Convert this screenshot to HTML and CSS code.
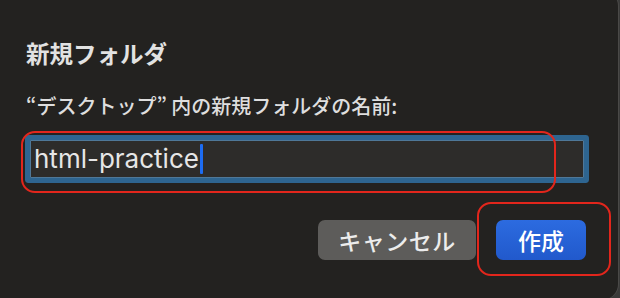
FILE: index.html
```html
<!DOCTYPE html>
<html lang="ja">
<head>
<meta charset="utf-8">
<link rel="stylesheet" href="styles.css">
</head>
<body>
<div class="dialog">
  <div class="title">新規フォルダ</div>
  <div class="label">“デスクトップ” 内の新規フォルダの名前:</div>
  <div class="field"><span class="value">html-practice</span><span class="caret"></span></div>
  <div class="actions">
    <div class="btn cancel">キャンセル</div>
    <div class="btn primary">作成</div>
  </div>
  <div class="mark mark-field"></div>
  <div class="mark mark-btn"></div>
</div>
</body>
</html>
```
FILE: styles.css
```css
html, body {
  margin: 0;
  padding: 0;
  background: #3a3a39;
  overflow: hidden;
}
.dialog {
  position: relative;
  width: 618px;
  height: 310px;
  margin-top: -10px;
  box-sizing: border-box;
  padding: 48px 32px 0 26px;
  background: #232220;
  border-radius: 0 16px 16px 0;
  box-shadow: 1px 0 0 #4a4947;
  font-family: "Noto Sans CJK JP", "Noto Sans", sans-serif;
  color: #e4e4e4;
}
.title {
  font-size: 23.5px;
  line-height: 30px;
  font-weight: 700;
  color: #e2e2e2;
}
.label {
  margin-top: 25px;
  font-size: 20px;
  line-height: 26px;
  font-weight: 500;
  color: #dedede;
}
.field {
  margin-top: 21px;
  margin-left: 4px;
  width: 554px;
  height: 38px;
  box-sizing: border-box;
  border: 1px solid #4f7898;
  background: #2d2c2a;
  box-shadow: 0 0 0 5px #2e6590;
  border-radius: 1px;
  padding-left: 3px;
  display: flex;
  align-items: center;
}
.value {
  font-family: Inter, "Noto Sans", sans-serif;
  font-size: 26px;
  line-height: 36px;
  color: #e6e6e6;
}
.caret {
  display: inline-block;
  width: 3px;
  height: 30px;
  margin-left: 1px;
  background: #1d6cf2;
  border-radius: 1px;
}
.actions {
  margin-top: 42px;
  display: flex;
  justify-content: flex-end;
  gap: 20px;
}
.btn {
  height: 40px;
  box-sizing: border-box;
  border-radius: 7px;
  display: flex;
  align-items: center;
  justify-content: center;
  font-size: 23px;
  font-weight: 500;
  color: #ececec;
}
.cancel {
  width: 158px;
  background: #5d5c5a;
  letter-spacing: 0.5px;
}
.primary {
  width: 90px;
  background: linear-gradient(#2c6be0, #2159cc);
  color: #ffffff;
}
.mark {
  position: absolute;
  border: 2.5px solid #e2261c;
  box-sizing: border-box;
  border-radius: 14px;
}
.mark-field {
  left: 21px;
  top: 141px;
  width: 535px;
  height: 62px;
}
.mark-btn {
  left: 477px;
  top: 212px;
  width: 134px;
  height: 74px;
}
```
